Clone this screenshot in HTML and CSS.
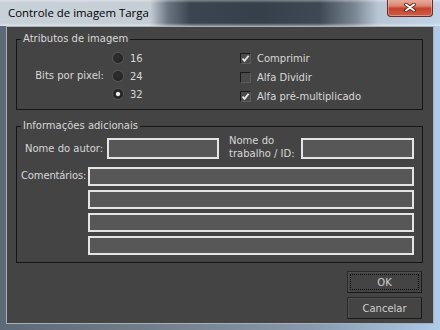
FILE: index.html
```html
<!DOCTYPE html>
<html lang="pt">
<head>
    <meta charset="UTF-8">
    <title>Controle de imagem Targa</title>
    <link rel="stylesheet" href="styles.css">
</head>
<body>
    <div class="window">
        <div class="titlebar">
            <span class="title">Controle de imagem Targa</span>
            <button class="close" aria-label="Fechar">
                <svg width="12" height="9" viewBox="0 0 12 9">
                    <path d="M2 1.5 L10 7.5 M10 1.5 L2 7.5" stroke="#5a2218" stroke-width="3.6" stroke-linecap="round"/>
                    <path d="M2 1.5 L10 7.5 M10 1.5 L2 7.5" stroke="#fff" stroke-width="2" stroke-linecap="round"/>
                </svg>
            </button>
        </div>

        <div class="client">
            <fieldset class="group attrs">
                <legend>Atributos de imagem</legend>
                <div class="bits-label">Bits por pixel:</div>
                <div class="radios">
                    <label class="opt"><span class="radio"></span>16</label>
                    <label class="opt"><span class="radio"></span>24</label>
                    <label class="opt"><span class="radio on"></span>32</label>
                </div>
                <div class="checks">
                    <label class="opt">
                        <span class="check"><svg width="9" height="9" viewBox="0 0 9 9"><path d="M1.5 4.5 L3.5 6.8 L7.6 1.8" fill="none" stroke="#e8e8e8" stroke-width="1.8"/></svg></span>
                        Comprimir
                    </label>
                    <label class="opt">
                        <span class="check"></span>
                        Alfa Dividir
                    </label>
                    <label class="opt">
                        <span class="check"><svg width="9" height="9" viewBox="0 0 9 9"><path d="M1.5 4.5 L3.5 6.8 L7.6 1.8" fill="none" stroke="#e8e8e8" stroke-width="1.8"/></svg></span>
                        Alfa pré-multiplicado
                    </label>
                </div>
            </fieldset>

            <fieldset class="group info">
                <legend>Informações adicionais</legend>
                <div class="names-row">
                    <span class="lbl author">Nome do autor:</span>
                    <span class="field author-field"></span>
                    <span class="lbl job">Nome do<br>trabalho / ID:</span>
                    <span class="field job-field"></span>
                </div>
                <div class="comments-row">
                    <span class="lbl comments">Comentários:</span>
                    <div class="comment-lines">
                        <span class="field line"></span>
                        <span class="field line"></span>
                        <span class="field line"></span>
                        <span class="field line"></span>
                    </div>
                </div>
            </fieldset>

            <div class="buttons">
                <button class="btn default"><span class="focus">OK</span></button>
                <button class="btn">Cancelar</button>
            </div>
        </div>
    </div>
</body>
</html>
```

FILE: styles.css
```css
body {
    margin: 0;
    width: 440px;
    height: 330px;
    overflow: hidden;
    font-family: 'DejaVu Sans', Verdana, sans-serif;
}
.window {
    height: 330px;
    box-sizing: border-box;
    display: flex;
    flex-direction: column;
    padding: 0 6px 6px;
    background: linear-gradient(to right, #5d6976 0, #6f7b87 30%, #8799ab 70%, #aecbe8 100%);
}
.titlebar {
    height: 26px;
    flex: none;
    margin: 0 -6px;
    display: flex;
    align-items: flex-start;
    background:
        linear-gradient(to bottom, rgba(255, 255, 255, 0.35) 0, rgba(255, 255, 255, 0) 3px, rgba(255, 255, 255, 0) 23px, rgba(255, 255, 255, 0.45) 26px),
        linear-gradient(to right, #c8d0d8 0, #c5cdd5 150px, #6a7581 168px, #3b4551 190px, #36404b 260px, #3f4955 320px, #7b8794 355px, #b8c6d4 378px, #c0d4e8 440px);
}
.title {
    flex: 1;
    padding: 5px 0 0 8px;
    font-family: 'Open Sans', sans-serif;
    font-size: 11.4px;
    color: #000;
    white-space: nowrap;
}
.close {
    width: 46px;
    height: 18px;
    margin: -1px 7px 0 0;
    padding: 0;
    display: flex;
    align-items: center;
    justify-content: center;
    border: 1px solid #6b2a22;
    border-top: none;
    border-radius: 0 0 4px 4px;
    background: linear-gradient(to bottom, #eab1a4 0, #dc8570 40%, #c4432c 55%, #cd5d45 100%);
    box-shadow: inset 0 0 0 1px rgba(255, 220, 210, 0.4);
}
.client {
    flex: 1;
    border: 1px solid #a5b0bb;
    background: #444444;
    padding: 5px 11px 0 9px;
    color: #d8d8d8;
    font-size: 10px;
    white-space: nowrap;
}
.group {
    margin: 0;
    border: 1px solid #151515;
    padding: 0;
    min-width: 0;
}
.group legend {
    margin-left: 4px;
    padding: 0 2px;
    line-height: 14px;
    color: #d8d8d8;
}
.attrs {
    display: flex;
    align-items: flex-start;
    padding: 3px 0 3px;
    margin-right: -1px;
}
.bits-label {
    width: 87px;
    padding: 21px 9px 0 0;
    line-height: 12px;
    text-align: right;
}
.radios {
    width: 127px;
}
.opt {
    display: flex;
    align-items: center;
    height: 18px;
}
.radio {
    width: 10px;
    height: 10px;
    margin-right: 7px;
    border-radius: 50%;
    box-sizing: border-box;
    background: radial-gradient(circle at 45% 40%, #303030 0, #262626 60%, #1c1c1c 100%);
    box-shadow: 0 0 0 1px rgba(120, 120, 120, 0.35);
}
.radio.on {
    background: radial-gradient(circle at 50% 50%, #f4f4f4 0, #e8e8e8 1.6px, #2a2a2a 2.6px, #1c1c1c 100%);
}
.checks .opt {
    height: 19px;
}
.check {
    width: 11px;
    height: 11px;
    margin-right: 6px;
    box-sizing: border-box;
    display: flex;
    align-items: center;
    justify-content: center;
    border: 1px solid;
    border-color: #1a1a1a #5c5c5c #5c5c5c #1a1a1a;
    background: #4a4a4a;
}
.info {
    margin-top: 9px;
    margin-right: -1px;
    padding: 5px 8px 7px 0;
}
.names-row {
    display: flex;
    align-items: flex-start;
    height: 21px;
}
.lbl.author {
    box-sizing: border-box;
    width: 90px;
    padding: 5px 0 0 8px;
}
.field {
    display: block;
    box-sizing: border-box;
    height: 21px;
    border: 2px solid #e4e4e4;
    background: #575757;
}
.author-field {
    width: 112px;
}
.lbl.job {
    box-sizing: border-box;
    width: 82px;
    padding-left: 10px;
    margin-top: -4px;
    line-height: 13px;
}
.job-field {
    flex: 1;
}
.comments-row {
    display: flex;
    margin-top: 8px;
}
.lbl.comments {
    box-sizing: border-box;
    width: 71px;
    padding: 3px 0 0 4px;
    letter-spacing: -0.15px;
}
.comment-lines {
    flex: 1;
    display: flex;
    flex-direction: column;
    gap: 4px;
}
.field.line {
    height: 19px;
}
.buttons {
    display: flex;
    flex-direction: column;
    align-items: flex-end;
    gap: 4px;
    margin-top: 8px;
}
.btn {
    width: 75px;
    height: 22px;
    padding: 0;
    font-family: 'DejaVu Sans', Verdana, sans-serif;
    font-size: 10px;
    color: #cfcfcf;
    background: #444444;
    border: 1px solid;
    border-color: #2a2a2a #1a1a1a #1a1a1a #2a2a2a;
    box-shadow: inset 1px 1px 0 #4e4e4e;
}
.btn.default {
    padding: 2px;
}
.btn .focus {
    display: flex;
    align-items: center;
    justify-content: center;
    height: 100%;
    border: 1px dotted #0a0a0a;
    box-sizing: border-box;
}
```
